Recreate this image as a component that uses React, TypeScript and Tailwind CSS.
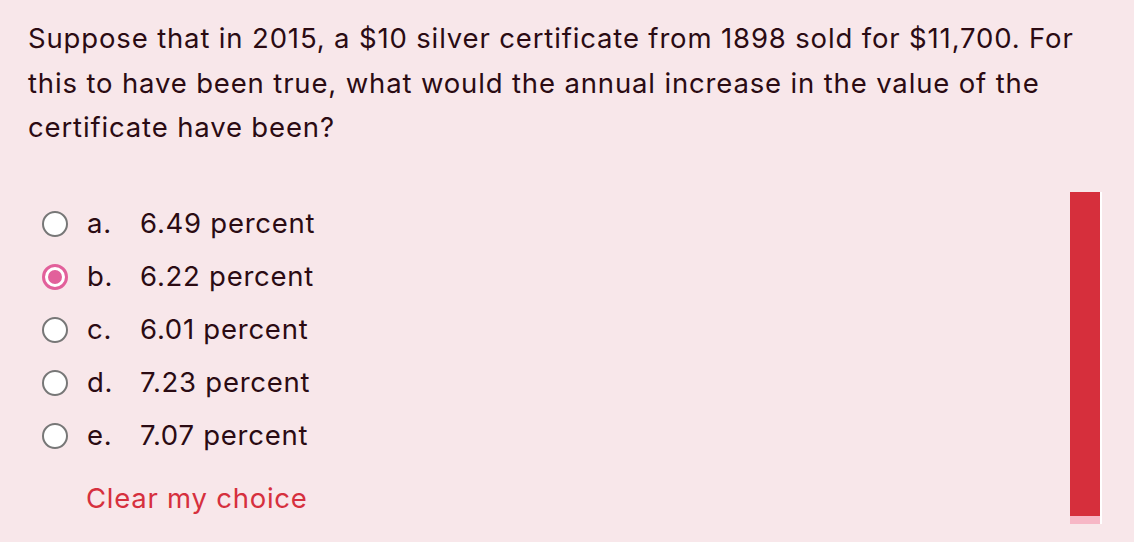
import React from "react";

const options = [
  { letter: "a.", text: "6.49 percent", checked: false },
  { letter: "b.", text: "6.22 percent", checked: true },
  { letter: "c.", text: "6.01 percent", checked: false },
  { letter: "d.", text: "7.23 percent", checked: false },
  { letter: "e.", text: "7.07 percent", checked: false },
];

function Radio({ checked }: { checked: boolean }) {
  if (checked) {
    return (
      <span className="flex h-[26px] w-[26px] items-center justify-center rounded-full border-[3px] border-[#e2609b] bg-white">
        <span className="h-[14px] w-[14px] rounded-full bg-[#e2609b]" />
      </span>
    );
  }
  return <span className="block h-[26px] w-[26px] rounded-full border-2 border-[#777] bg-white" />;
}

export default function App() {
  return (
    <div
      className="h-[542px] w-full overflow-hidden bg-[#f8e7ea] text-[#2b0b13] tracking-[0.75px]"
      style={{ fontFamily: "Inter, 'Noto Sans', sans-serif" }}
    >
      <p className="pl-[28px] pr-[36px] pt-[16px] text-[27.5px] leading-[44.5px] tracking-[0.85px]">
        Suppose that in 2015, a $10 silver certificate from 1898 sold for $11,700. For this to have been true, what would the annual increase in the value of the certificate have been?
      </p>
      <div className="flex">
        <div className="flex-1 pl-[42px] pt-[48px]">
          <div className="flex flex-col">
            {options.map((o) => (
              <div key={o.letter} className="flex h-[53px] items-center">
                <Radio checked={o.checked} />
                <span className="ml-[19px] w-[53px] text-[27.5px]">{o.letter}</span>
                <span className="text-[27.5px]">{o.text}</span>
              </div>
            ))}
          </div>
          <div className="ml-[44px] mt-[15px] text-[27.5px] text-[#d6303e]">Clear my choice</div>
        </div>
        <div className="mr-[32px] mt-[42px] flex w-[32px] self-start border-r-2 border-white">
          <div className="flex w-[30px] flex-col">
            <div className="h-[324px] bg-[#d62f3c]" />
            <div className="h-[8px] bg-[#f7b7c6]" />
          </div>
        </div>
      </div>
    </div>
  );
}
